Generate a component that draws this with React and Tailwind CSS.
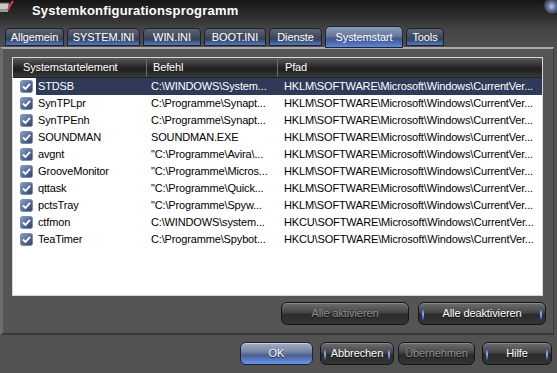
const rows = [
  { name: 'STDSB', cmd: 'C:\\WINDOWS\\System...', path: 'HKLM\\SOFTWARE\\Microsoft\\Windows\\CurrentVer...', selected: true },
  { name: 'SynTPLpr', cmd: 'C:\\Programme\\Synapt...', path: 'HKLM\\SOFTWARE\\Microsoft\\Windows\\CurrentVer...' },
  { name: 'SynTPEnh', cmd: 'C:\\Programme\\Synapt...', path: 'HKLM\\SOFTWARE\\Microsoft\\Windows\\CurrentVer...' },
  { name: 'SOUNDMAN', cmd: 'SOUNDMAN.EXE', path: 'HKLM\\SOFTWARE\\Microsoft\\Windows\\CurrentVer...' },
  { name: 'avgnt', cmd: '"C:\\Programme\\Avira\\...', path: 'HKLM\\SOFTWARE\\Microsoft\\Windows\\CurrentVer...' },
  { name: 'GrooveMonitor', cmd: '"C:\\Programme\\Micros...', path: 'HKLM\\SOFTWARE\\Microsoft\\Windows\\CurrentVer...' },
  { name: 'qttask', cmd: '"C:\\Programme\\Quick...', path: 'HKLM\\SOFTWARE\\Microsoft\\Windows\\CurrentVer...' },
  { name: 'pctsTray', cmd: '"C:\\Programme\\Spyw...', path: 'HKLM\\SOFTWARE\\Microsoft\\Windows\\CurrentVer...' },
  { name: 'ctfmon', cmd: 'C:\\WINDOWS\\system...', path: 'HKCU\\SOFTWARE\\Microsoft\\Windows\\CurrentVer...' },
  { name: 'TeaTimer', cmd: 'C:\\Programme\\Spybot...', path: 'HKCU\\SOFTWARE\\Microsoft\\Windows\\CurrentVer...' },
];

const tabs = [
  { label: 'Allgemein', w: 'w-[59px]' },
  { label: 'SYSTEM.INI', w: 'w-[73px]' },
  { label: 'WIN.INI', w: 'w-[58px]' },
  { label: 'BOOT.INI', w: 'w-[62px]' },
  { label: 'Dienste', w: 'w-[53px]' },
  { label: 'Systemstart', w: 'w-[78px]', active: true },
  { label: 'Tools', w: 'w-[38px]' },
];

const CheckBox = () => (
  <svg width="13" height="13" viewBox="0 0 13 13">
    <defs>
      <linearGradient id="cbg" x1="0" y1="0" x2="1" y2="1">
        <stop offset="0" stopColor="#8d9fc9" />
        <stop offset="1" stopColor="#2c3d68" />
      </linearGradient>
    </defs>
    <rect x="0.5" y="0.5" width="12" height="12" rx="2" fill="url(#cbg)" stroke="#7b8db5" />
    <path d="M3 6.5 L5.5 9 L10 3.8" fill="none" stroke="#ffffff" strokeWidth="1.8" />
  </svg>
);

// blue end marks on enabled dark buttons
const Glow = () => (
  <>
    <span className="absolute left-[3px] top-[5px] bottom-[4px] w-[2px] rounded bg-[linear-gradient(to_bottom,#2b3f7a,#8fb0ff,#2b3f7a)]" />
    <span className="absolute right-[3px] top-[5px] bottom-[4px] w-[2px] rounded bg-[linear-gradient(to_bottom,#2b3f7a,#8fb0ff,#2b3f7a)]" />
  </>
);

const DarkButton = ({ label, w, disabled }) => (
  <div
    className={`relative ${w} h-[23px] rounded-[6px] border border-[#161616] bg-[linear-gradient(to_bottom,#6e6e6e_0%,#474747_45%,#2c2c2c_55%,#343434_100%)] shadow-[inset_0_1px_0_#8a8a8a] flex items-center justify-center text-[11px] tracking-[-0.1px] ${disabled ? 'text-[#8e8e8e]' : 'text-white'}`}
  >
    {!disabled && <Glow />}
    <span className="relative [text-shadow:0_1px_0_#111]">{label}</span>
  </div>
);

export default function App() {
  return (
    <div className="w-[557px] h-[373px] overflow-hidden bg-[#525252] flex flex-col font-['Liberation_Sans',Arial,sans-serif] select-none">
      {/* title + tabs */}
      <div className="relative h-[47px] shrink-0 bg-[linear-gradient(to_bottom,#161616_0%,#2e2e2e_35%,#444_60%,#4f4f4f_100%)]">
        <svg className="absolute left-0 top-0" width="14" height="14" viewBox="0 0 14 14">
          <rect x="-2" y="3" width="11" height="7" fill="#c9c9c9" stroke="#555" />
          <rect x="0" y="10" width="8" height="2" fill="#9a9a9a" />
          <path d="M8 9 L13 1" stroke="#d23a4a" strokeWidth="2" />
        </svg>
        <div className="absolute right-[-5px] top-[-4px] w-[19px] h-[19px] rounded-full border border-[#222] bg-[radial-gradient(circle_at_45%_55%,#b8c8f0_0%,#5a6a90_35%,#2a2a2a_70%)]" />
        <div className="h-[22px] pl-[32px] flex items-center text-white font-bold text-[13px] tracking-[0.2px]">
          Systemkonfigurationsprogramm
        </div>
        <div className="flex items-end h-[25px] pl-[5px] gap-[3px]">
          {tabs.map((t) =>
            t.active ? (
              <div
                key={t.label}
                className={`${t.w} h-[22px] -mb-[1px] rounded-t-[5px] border border-[#1e2434] bg-[linear-gradient(to_bottom,#8e9cb8_0%,#66789c_45%,#3f5688_60%,#5f86d8_100%)] text-white text-[11px] tracking-[-0.1px] flex items-start justify-center pt-[2px]`}
              >
                {t.label}
              </div>
            ) : (
              <div
                key={t.label}
                className={`${t.w} h-[18px] mb-[1px] rounded-t-[4px] border border-[#1c2130] bg-[linear-gradient(to_bottom,#5e6576_0%,#434b5d_45%,#36425e_65%,#5577c0_100%)] text-white text-[11px] tracking-[-0.1px] flex items-center justify-center pt-[1px]`}
              >
                {t.label}
              </div>
            )
          )}
        </div>
      </div>

      {/* tab panel */}
      <div className="w-[554px] h-[288px] shrink-0 border-l-[3px] border-l-[#6c6c6c] border-t-[2px] border-t-[#a9a9a9] border-r border-r-[#3c3c3c] border-b-[2px] border-b-[#383838] bg-[#555555] flex flex-col">
        <div className="ml-[9px] mt-[8px] w-[531px] h-[239px] border border-[#d6d6d6] bg-white overflow-hidden">
          {/* header */}
          <div className="grid grid-cols-[134px_131px_1fr] h-[20px] bg-[linear-gradient(to_bottom,#5a5a5a_0%,#2a2a2a_45%,#1f1f1f_60%,#3a3a3a_100%)] text-white text-[11px] tracking-[-0.15px] border-b border-[#222]">
            <div className="pl-[10px] flex items-center border-r border-r-[#6a6a6a]">Systemstartelement</div>
            <div className="pl-[6px] flex items-center border-r border-r-[#6a6a6a]">Befehl</div>
            <div className="pl-[7px] flex items-center">Pfad</div>
          </div>
          {rows.map((r) => (
            <div key={r.name} className="flex h-[17px] text-[11px] tracking-[-0.15px]">
              <div className="w-[23px] shrink-0 flex items-center pl-[7px]">
                <CheckBox />
              </div>
              <div className={`flex-1 grid grid-cols-[111px_131px_1fr] items-center whitespace-nowrap overflow-hidden ${r.selected ? 'bg-[#2e3a58] text-white' : 'text-black'}`}>
                <div className="pl-[2px] overflow-hidden">{r.name}</div>
                <div className="pl-[4px] overflow-hidden">{r.cmd}</div>
                <div className="pl-[6px] overflow-hidden">{r.path}</div>
              </div>
            </div>
          ))}
        </div>
        <div className="flex justify-end gap-[9px] pr-[7px] mt-[6px]">
          <DarkButton label="Alle aktivieren" w="w-[128px]" disabled />
          <DarkButton label="Alle deaktivieren" w="w-[128px]" />
        </div>
      </div>

      {/* dialog buttons */}
      <div className="flex pl-[240px] pt-[7px]">
        <div className="relative w-[73px] h-[23px] rounded-[6px] border border-[#1a2238] bg-[linear-gradient(to_bottom,#a3aec4_0%,#7887a6_40%,#4a5f8e_60%,#6a97f5_100%)] shadow-[inset_0_1px_0_#c8d0e0] flex items-center justify-center text-white text-[11px]">
          <span className="[text-shadow:0_1px_0_#1a2238]">OK</span>
        </div>
        <div className="ml-[7px]">
          <DarkButton label="Abbrechen" w="w-[74px]" />
        </div>
        <div className="ml-[4px]">
          <DarkButton label="Übernehmen" w="w-[77px]" disabled />
        </div>
        <div className="ml-[7px]">
          <DarkButton label="Hilfe" w="w-[70px]" />
        </div>
      </div>
    </div>
  );
}
